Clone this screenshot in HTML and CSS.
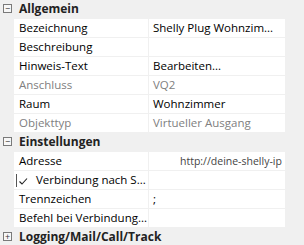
FILE: index.html
```html
<!DOCTYPE html>
<html lang="de">
<head>
    <meta charset="UTF-8">
    <title>Eigenschaften</title>
    <link rel="stylesheet" href="styles.css">
</head>
<body>
    <div class="grid">
        <div class="cat"><span class="toggle">&minus;</span>Allgemein</div>
        <div class="row"><div class="name">Bezeichnung</div><div class="value">Shelly Plug Wohnzim...</div></div>
        <div class="row"><div class="name">Beschreibung</div><div class="value"></div></div>
        <div class="row"><div class="name">Hinweis-Text</div><div class="value">Bearbeiten...</div></div>
        <div class="row readonly"><div class="name">Anschluss</div><div class="value">VQ2</div></div>
        <div class="row"><div class="name">Raum</div><div class="value">Wohnzimmer</div></div>
        <div class="row readonly"><div class="name">Objekttyp</div><div class="value">Virtueller Ausgang</div></div>

        <div class="cat"><span class="toggle">&minus;</span>Einstellungen</div>
        <div class="row"><div class="name">Adresse</div><div class="value url">http://deine-shelly-ip</div></div>
        <div class="row"><div class="name check-name">
            <span class="check"><svg width="10" height="10" viewBox="0 0 10 10">
                <path d="M1.5 4.5 L4 7 L9 1.5" stroke="#222" stroke-width="1.1" fill="none"/>
            </svg></span>Verbindung nach S...</div><div class="value"></div></div>
        <div class="row"><div class="name">Trennzeichen</div><div class="value">;</div></div>
        <div class="row"><div class="name">Befehl bei Verbindung...</div><div class="value"></div></div>

        <div class="cat"><span class="toggle">+</span>Logging/Mail/Call/Track</div>
    </div>
</body>
</html>
```

FILE: styles.css
```css
body {
    margin: 0;
    background: #f0f0f0;
    font-family: 'Open Sans', sans-serif;
    font-size: 11.5px;
    color: #000;
}
.grid {
    width: 285px;
}
.cat {
    height: 18px;
    line-height: 18px;
    padding-left: 19px;
    font-weight: bold;
    font-size: 12px;
    color: #222;
    position: relative;
    margin-bottom: 1px;
}
.toggle {
    position: absolute;
    left: 3px;
    top: 4px;
    width: 7px;
    height: 7px;
    border: 1px solid #7a7a7a;
    font-weight: normal;
    font-size: 9px;
    line-height: 7px;
    text-align: center;
    color: #333;
    background: #f7f7f7;
}
.row {
    display: flex;
    margin-left: 14px;
    height: 18px;
    line-height: 18px;
    background: #fff;
    border-bottom: 1px solid #f0f0f0;
}
.name {
    width: 135px;
    padding-left: 5px;
    box-sizing: border-box;
    border-right: 1px solid #f0f0f0;
    white-space: nowrap;
    overflow: hidden;
}
.value {
    flex: 1;
    padding-left: 4px;
    white-space: nowrap;
    overflow: hidden;
}
.readonly .name, .readonly .value {
    color: #808080;
}
.url {
    padding-left: 31px;
    color: #444;
    font-size: 10.5px;
}
.check-name {
    display: flex;
    align-items: center;
    padding-left: 2px;
}
.check {
    display: flex;
    align-items: flex-end;
    height: 13px;
    padding-left: 1px;
    margin-right: 8px;
    border-left: 1px solid #555;
}
```
